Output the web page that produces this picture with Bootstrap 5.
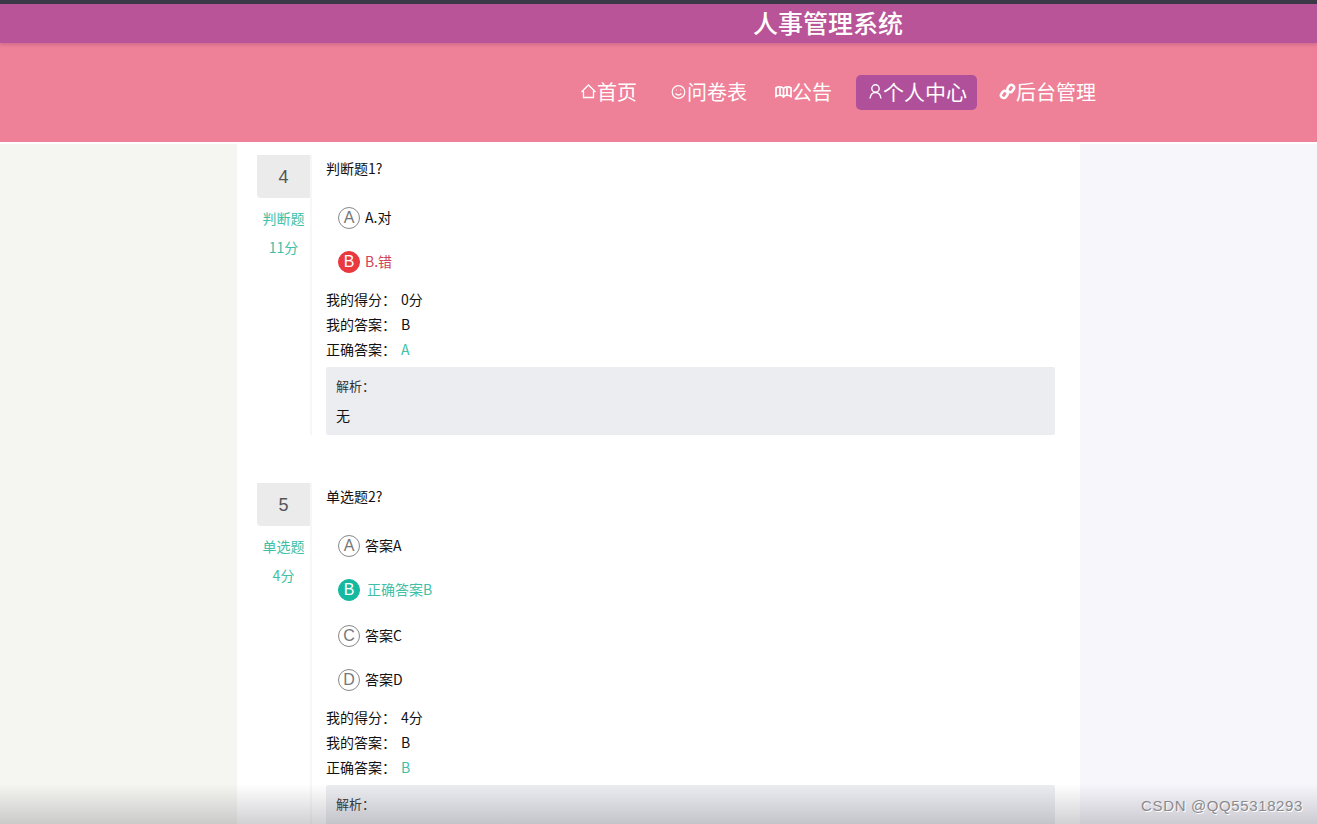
<!DOCTYPE html>
<html lang="zh">
<head>
<meta charset="utf-8">
<title>人事管理系统</title>
<link href="https://cdn.jsdelivr.net/npm/bootstrap@5.3.0/dist/css/bootstrap.min.css" rel="stylesheet">
<style>
html,body{height:824px;overflow:hidden;}
body{font-family:"Noto Sans CJK SC","Liberation Sans",sans-serif;font-size:14px;color:#111;background:#fff;position:relative;}
.top-strip{height:4px;background:#3b3947;}
.title-bar{height:39px;background:#b85497;box-shadow:0 2px 3px rgba(160,70,120,.35);position:relative;}
.site-title{padding-left:753px;font-size:25px;line-height:36px;color:#fff;font-weight:500;}
.nav-bar{height:99px;background:#ee8198;}
.menu-row{padding:32px 0 0 570px;}
.menu-link{height:35px;padding:0 10px 2px;font-size:20px;line-height:33px;color:#fff;text-decoration:none;border-radius:5px;white-space:nowrap;}
.menu-link svg{width:17px;height:17px;flex:none;}
.menu-link.now{background:#b0509a;padding:0 10px 2px 12px;font-size:21px;}
.menu-link.now svg{width:15px;}
.gap-a{margin-right:13px;}
.gap-c{margin-right:8px;}
.gap-b{margin-right:14px;}
.gap-d{margin-right:12px;}
.page-row{height:682px;}
.side-l{width:237px;background:#f5f6f1;border-top:2px solid #fff;}
.side-r{background:#f7f6fb;border-top:2px solid #fff;}
.sheet{width:843px;background:#fff;padding:13px 25px 0 20px;}
.quiz{margin-bottom:48px;}
.quiz-left{width:55px;border-right:2px solid #f7f7f7;text-align:center;color:#3fc0a6;font-size:14px;}
.quiz-num{height:43px;background:#ebebeb;line-height:45px;font-family:"Liberation Sans",sans-serif;font-size:18px;color:#555;border-radius:0 0 0 4px;margin-bottom:6px;}
.quiz-type{line-height:28px;}
.quiz-score{line-height:30px;}
.quiz-main{padding-left:14px;margin-top:-1px;}
.quiz-q{line-height:28px;margin-bottom:13px;}
.opt{height:44px;padding-left:12px;gap:5px;}
.opt-tall{height:46px;}
.opt-mark{width:22px;height:22px;margin-top:2px;border-radius:50%;border:1px solid #888;color:#777;font-family:"Liberation Sans",sans-serif;font-size:16px;line-height:20px;text-align:center;flex:none;}
.opt-bad .opt-mark{background:#e9393e;border-color:#e9393e;color:#fff;}
.opt-bad{color:#d0435a;}
.opt-good .opt-mark{background:#14b9a0;border-color:#14b9a0;color:#fff;}
.opt-good{color:#3fc0a6;gap:7px;padding-bottom:2px;}
.meta-list{padding-top:4px;}
.meta-line{height:25px;line-height:25px;}
.meta-key{width:75px;}
.teal{color:#3fc0a6;}
.note-box{margin-top:5px;height:68px;background:#ecedf1;padding:5px 10px 0;border-radius:2px;}
.note-head{font-size:13px;line-height:28px;color:#333;}
.note-body{line-height:30px;}
.fade-foot{position:absolute;left:0;right:0;bottom:0;height:40px;background:linear-gradient(to bottom,rgba(90,90,100,0),rgba(90,90,100,.28));pointer-events:none;}
.mark-csdn{position:absolute;right:14px;bottom:8px;font-family:"Liberation Sans",sans-serif;font-size:15px;line-height:20px;color:#8a8a8e;text-shadow:1px 1px 0 #fff;letter-spacing:.62px;}
</style>
</head>
<body>
<div class="top-strip"></div>
<div class="title-bar"><div class="site-title">人事管理系统</div></div>
<div class="nav-bar">
  <nav class="menu-row d-flex">
    <a class="menu-link d-flex align-items-center gap-a" href="#"><svg viewBox="0 0 17 17" fill="none" stroke="#fff" stroke-width="1.3"><path d="M1.500 9 8.500 2 15.500 9M3.500 8v6.500h10V8"/></svg>首页</a>
    <a class="menu-link d-flex align-items-center gap-c" href="#"><svg viewBox="0 0 17 17" fill="none" stroke="#fff" stroke-width="1.200"><circle cx="8.500" cy="9" r="6.300"/><path d="M5.500 10.500q3 3 6 0"/><path d="M6 7h.8M10.200 7h.8"/></svg>问卷表</a>
    <a class="menu-link d-flex align-items-center gap-b" href="#"><svg viewBox="0 0 17 17" fill="none" stroke="#fff" stroke-width="1.700"><path d="M8.500 5.500C6.500 3.500 3 3.500 1 5V13.500C3.500 12 6.500 12 8.500 13.500 10.500 12 13.500 12 16 13.500V5C14 3.500 10.500 3.500 8.500 5.500ZM8.500 5.500V15M5 5V12.500M12 5V12.500"/></svg>公告</a>
    <a class="menu-link now d-flex align-items-center gap-d" href="#"><svg viewBox="0 0 15 17" fill="none" stroke="#fff" stroke-width="1.400"><circle cx="7.500" cy="5.500" r="3.700"/><path d="M2 15.500C2.500 11.500 5 9.500 7.500 9.500S12.500 11.500 13 15.500"/></svg>个人中心</a>
    <a class="menu-link d-flex align-items-center" href="#"><svg viewBox="0 0 17 17" fill="none" stroke="#fff" stroke-width="2.500"><rect x="1.500" y="8.800" width="7.500" height="5.500" rx="2.700" transform="rotate(-55 5.200 11.500)"/><rect x="8" y="2.800" width="7.500" height="5.500" rx="2.700" transform="rotate(-55 11.700 5.500)"/></svg>后台管理</a>
  </nav>
</div>
<div class="page-row d-flex">
  <div class="side-l"></div>
  <main class="sheet">
    <section class="quiz d-flex">
      <div class="quiz-left">
        <div class="quiz-num">4</div>
        <div class="quiz-type">判断题</div>
        <div class="quiz-score">11分</div>
      </div>
      <div class="quiz-main flex-grow-1">
        <div class="quiz-q">判断题1?</div>
        <div class="opt d-flex align-items-center"><span class="opt-mark">A</span><span>A.对</span></div>
        <div class="opt opt-bad d-flex align-items-center"><span class="opt-mark">B</span><span>B.错</span></div>
        <div class="meta-list">
          <div class="meta-line d-flex"><span class="meta-key">我的得分：</span><span>0分</span></div>
          <div class="meta-line d-flex"><span class="meta-key">我的答案：</span><span>B</span></div>
          <div class="meta-line d-flex"><span class="meta-key">正确答案：</span><span class="teal">A</span></div>
        </div>
        <div class="note-box">
          <div class="note-head">解析：</div>
          <div class="note-body">无</div>
        </div>
      </div>
    </section>
    <section class="quiz d-flex">
      <div class="quiz-left">
        <div class="quiz-num">5</div>
        <div class="quiz-type">单选题</div>
        <div class="quiz-score">4分</div>
      </div>
      <div class="quiz-main flex-grow-1">
        <div class="quiz-q">单选题2?</div>
        <div class="opt d-flex align-items-center"><span class="opt-mark">A</span><span>答案A</span></div>
        <div class="opt opt-tall opt-good d-flex align-items-center"><span class="opt-mark">B</span><span>正确答案B</span></div>
        <div class="opt d-flex align-items-center"><span class="opt-mark">C</span><span>答案C</span></div>
        <div class="opt d-flex align-items-center"><span class="opt-mark">D</span><span>答案D</span></div>
        <div class="meta-list">
          <div class="meta-line d-flex"><span class="meta-key">我的得分：</span><span>4分</span></div>
          <div class="meta-line d-flex"><span class="meta-key">我的答案：</span><span>B</span></div>
          <div class="meta-line d-flex"><span class="meta-key">正确答案：</span><span class="teal">B</span></div>
        </div>
        <div class="note-box">
          <div class="note-head">解析：</div>
        </div>
      </div>
    </section>
  </main>
  <div class="side-r flex-grow-1"></div>
</div>
<div class="fade-foot"></div>
<div class="mark-csdn">CSDN @QQ55318293</div>
<script src="https://cdn.jsdelivr.net/npm/bootstrap@5.3.0/dist/js/bootstrap.bundle.min.js"></script>
</body>
</html>
